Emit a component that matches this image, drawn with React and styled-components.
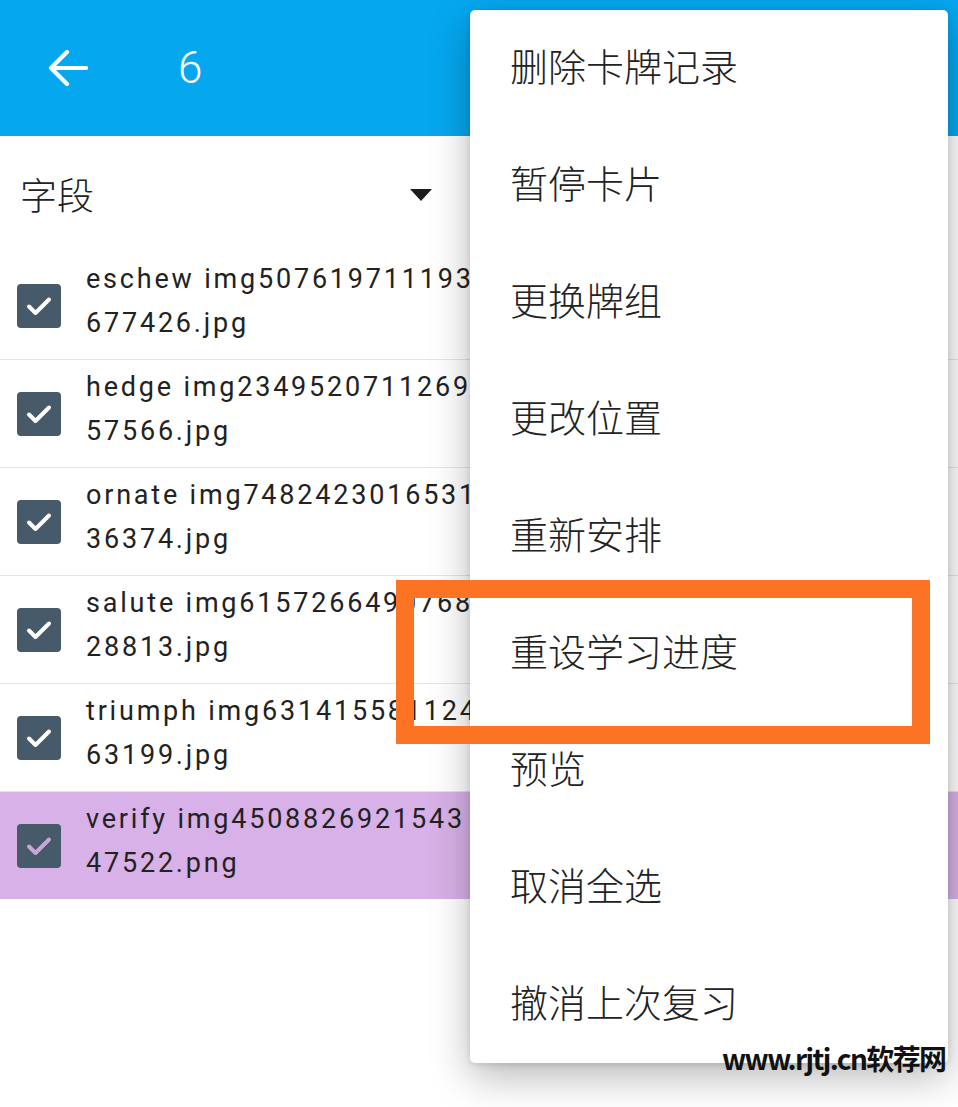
import React from "react";
import styled, { createGlobalStyle } from "styled-components";

const GlobalStyle = createGlobalStyle`
  html, body {
    margin: 0;
    padding: 0;
    background: #ffffff;
  }

  body {
    font-family: Roboto, "Noto Sans CJK SC", sans-serif;
  }
`;

const Page = styled.div`
  position: relative;
  width: 958px;
  height: 1107px;
  overflow: hidden;
  background: #ffffff;
`;

const Toolbar = styled.header`
  display: flex;
  align-items: center;
  height: 136px;
  background-color: #05a7ef;
  color: white;
`;

const BackButton = styled.button`
  display: flex;
  align-items: center;
  justify-content: center;

  width: 40px;
  height: 40px;
  margin-left: 48px;
  margin-right: 90px;

  border: none;
  outline: none;
  background: none;
  padding: 0;
`;

const Title = styled.h1`
  margin: 0;
  font-size: 44px;
  font-weight: 300;
  line-height: 1;
`;

const FieldBar = styled.div`
  display: flex;
  align-items: center;
  justify-content: space-between;

  height: 116px;
  padding: 0 526px 0 20px;

  font-family: "Noto Sans CJK SC", sans-serif;
  font-size: 37px;
  font-weight: 300;
  color: #222;
`;

const Caret = styled.span`
  width: 0;
  height: 0;
  margin-top: 2px;

  border-left: 11px solid transparent;
  border-right: 11px solid transparent;
  border-top: 12px solid #1d1d1d;
`;

const List = styled.ul`
  list-style: none;
  margin: 0;
  padding: 0;
`;

const Row = styled.li`
  display: flex;
  align-items: center;
  height: ${(p) => (p.$last ? "107px" : "108px")};
  box-sizing: border-box;

  padding-left: 17px;
  gap: 25px;
  overflow: hidden;

  background-color: ${(p) => (p.$selected ? "#d7b1e7" : "transparent")};
  border-bottom: ${(p) => (p.$last ? "none" : "1px solid #e4e4e4")};
`;

const Box = styled.span`
  display: flex;
  align-items: center;
  justify-content: center;
  flex-shrink: 0;

  width: 44px;
  height: 44px;
  border-radius: 4px;
  background-color: #465a69;
`;

const Label = styled.div`
  margin-top: -10px;
  font-family: Roboto, "Noto Sans CJK JP", sans-serif;
  font-size: 27px;
  font-weight: 400;
  line-height: 44px;
  letter-spacing: 2.8px;
  color: #222;
  white-space: nowrap;
`;

const Menu = styled.ul`
  position: absolute;
  top: 10px;
  left: 470px;

  width: 478px;
  margin: 0;
  padding: 0;
  list-style: none;

  background: white;
  border-radius: 5px;
  box-shadow: 0 14px 40px rgba(0, 0, 0, 0.28), 0 2px 6px rgba(0, 0, 0, 0.12);
`;

const MenuItem = styled.li`
  display: flex;
  align-items: center;
  height: 117px;
  box-sizing: border-box;
  padding: 0 0 8px 40px;

  font-family: "Noto Sans CJK SC", sans-serif;
  font-size: 38px;
  font-weight: 300;
  color: #222;
`;

const Highlight = styled.div`
  position: absolute;
  top: 580px;
  left: 396px;

  width: 534px;
  height: 164px;
  box-sizing: border-box;
  border: 18px solid #fc7423;
`;

const Watermark = styled.div`
  position: absolute;
  top: 1038px;
  left: 722px;

  font-family: "Noto Sans CJK SC", sans-serif;
  font-size: 28px;
  font-weight: 700;
  letter-spacing: -1.6px;
  color: #111;
`;

const rows = [
  ["eschew img507619711193", "677426.jpg"],
  ["hedge img2349520711269", "57566.jpg"],
  ["ornate img7482423016531", "36374.jpg"],
  ["salute img6157266490768", "28813.jpg"],
  ["triumph img631415581124", "63199.jpg"],
  ["verify img4508826921543", "47522.png"],
];

const menuItems = [
  "删除卡牌记录",
  "暂停卡片",
  "更换牌组",
  "更改位置",
  "重新安排",
  "重设学习进度",
  "预览",
  "取消全选",
  "撤消上次复习",
];

const BackArrow = () => (
  <svg width="40" height="40" viewBox="0 0 40 40" fill="none">
    <path
      d="M38 20H4M19 4L3 20l16 16"
      stroke="white"
      strokeWidth="4.2"
      strokeLinecap="round"
      strokeLinejoin="round"
    />
  </svg>
);

const Check = ({ color }) => (
  <svg width="30" height="30" viewBox="0 0 30 30" fill="none">
    <path
      d="M5 15.5l6.5 6.5L25 8.5"
      stroke={color}
      strokeWidth="4"
      strokeLinecap="round"
      strokeLinejoin="round"
    />
  </svg>
);

const App = () => {
  return (
    <Page>
      <GlobalStyle />
      <Toolbar>
        <BackButton>
          <BackArrow />
        </BackButton>
        <Title>6</Title>
      </Toolbar>

      <FieldBar>
        <span>字段</span>
        <Caret />
      </FieldBar>

      <List>
        {rows.map(([first, second], i) => {
          const selected = i === rows.length - 1;
          return (
            <Row key={first} $selected={selected} $last={selected}>
              <Box>
                <Check color={selected ? "#c9a6d9" : "white"} />
              </Box>
              <Label>
                {first}
                <br />
                {second}
              </Label>
            </Row>
          );
        })}
      </List>

      <Menu>
        {menuItems.map((item) => (
          <MenuItem key={item}>{item}</MenuItem>
        ))}
      </Menu>

      <Highlight />
      <Watermark>www.rjtj.cn软荐网</Watermark>
    </Page>
  );
};

export default App;
